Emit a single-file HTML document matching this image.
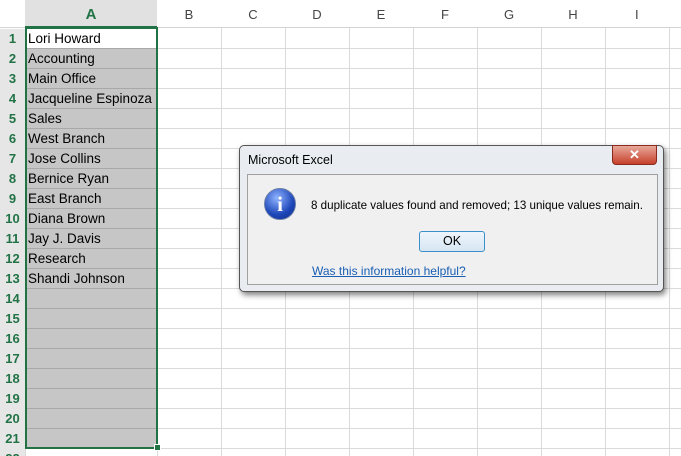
<!DOCTYPE html><html><head><style>
html,body{margin:0;width:681px;height:456px;overflow:hidden}
body{background:#fff;font-family:"Liberation Sans",sans-serif;position:relative}
.h{position:absolute;top:0;height:28px;background:#fff;border-bottom:1px solid #d4d4d4;box-sizing:border-box;text-align:center;line-height:29px;font-size:13px;color:#444}
.v{position:absolute;top:28px;height:428px;width:1px;background:#dadada}
.r{position:absolute;left:0;width:681px;height:1px;background:#dadada}
.rn{position:absolute;left:0;width:25px;height:20px;text-align:center;line-height:20px;font-size:13px;font-weight:bold;color:#217346;background:#e6e6e6}
.c{position:absolute;left:27px;width:129px;height:19px;background:#c6c6c6;border-bottom:1px solid #a8a8a8;font-size:13.5px;line-height:20px;padding-left:1px;color:#000}
</style></head><body>
<div class="h" style="left:0;width:25px;background:#fff"></div>
<div class="h" style="left:25px;width:132px;background:#e1e1e1;border-bottom:2px solid #217346;color:#217346;font-weight:bold;font-size:15px">A</div>
<div class="h" style="left:157px;width:64px">B</div><div class="h" style="left:221px;width:64px">C</div><div class="h" style="left:285px;width:64px">D</div><div class="h" style="left:349px;width:64px">E</div><div class="h" style="left:413px;width:64px">F</div><div class="h" style="left:477px;width:64px">G</div><div class="h" style="left:541px;width:64px">H</div><div class="h" style="left:605px;width:76px;text-align:left;padding-left:30px">I</div>
<div id="g"></div>
<script>
var g=document.getElementById('g'),s='';
var names=["Lori Howard","Accounting","Main Office","Jacqueline Espinoza","Sales","West Branch","Jose Collins","Bernice Ryan","East Branch","Diana Brown","Jay J. Davis","Research","Shandi Johnson"];
for(var i=0;i<22;i++){var t=29+i*20;s+='<div class="r" style="top:'+(t+19)+'px"></div><div class="rn" style="top:'+t+'px">'+(i+1)+'</div>';
if(i<21)s+='<div class="c" style="top:'+t+'px;'+(i==0?'background:#fff;':'')+'">'+(names[i]||'')+'</div>';}
[25,157,221,285,349,413,477,541,605,669].forEach(function(x){s+='<div class="v" style="left:'+x+'px"></div>'});
g.innerHTML=s;
</script>
<div style="position:absolute;left:25px;top:27px;width:129px;height:418px;border:2px solid #217346"></div>
<div style="position:absolute;left:154px;top:444px;width:5px;height:5px;background:#217346;border:1px solid #fff"></div>
<div style="position:absolute;left:239px;top:145px;width:425px;height:147px;background:#e9edf2;border:1px solid #555;border-radius:5px;box-shadow:2px 3px 6px rgba(0,0,0,.5);box-sizing:border-box">
<div style="position:absolute;left:8px;top:7px;font-size:12.5px;color:#000">Microsoft Excel</div>
<div style="position:absolute;left:372px;top:-1px;width:43px;height:18px;background:linear-gradient(#e8a89a,#c7402a);border:1px solid #8a2a1e;border-radius:0 0 4px 4px;color:#fff;text-align:center;font-weight:bold;font-size:13px;line-height:18px">✕</div>
<div style="position:absolute;left:7px;top:28px;width:409px;height:109px;background:#f0f0f0;border:1px solid #a0a0a0">
<div style="position:absolute;left:16px;top:13px;width:30px;height:30px;border-radius:50%;background:radial-gradient(circle at 40% 30%,#8fb4ff,#1d46b8 60%,#102c88);border:1px solid #6a7ea8;color:#fff;text-align:center;font:bold 21px 'Liberation Serif',serif;line-height:31px">i</div>
<div style="position:absolute;left:63px;top:24px;font-size:11.6px;white-space:nowrap">8 duplicate values found and removed; 13 unique values remain.</div>
<div style="position:absolute;left:171px;top:56px;width:64px;height:19px;border:1px solid #3c8fc8;border-radius:3px;background:linear-gradient(#eef5fb,#d7e6f3);text-align:center;font-size:12.5px;line-height:19px">OK</div>
<div style="position:absolute;left:64px;top:89px;font-size:12px;color:#1a5fb4;text-decoration:underline">Was this information helpful?</div>
</div></div>
</body></html>
